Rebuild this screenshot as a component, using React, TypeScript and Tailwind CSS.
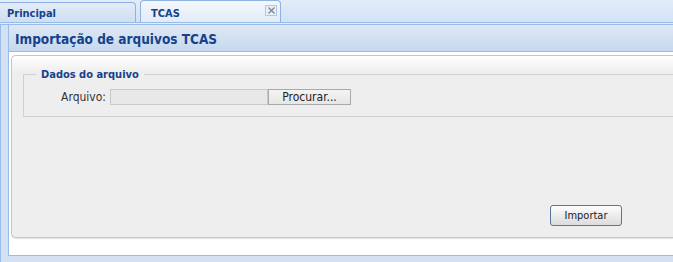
import React from "react";

const font = { fontFamily: "Tahoma, 'DejaVu Sans Condensed', 'DejaVu Sans', sans-serif" };

export default function App() {
  return (
    <div className="w-[673px] h-[262px] overflow-hidden bg-white" style={font}>
      {/* Tab strip */}
      <div className="h-[23px] flex items-end gap-[4px] bg-gradient-to-b from-[#e2edf9] to-[#d2e2f5] border-b border-[#99bbe8]">
        <div className="w-[137px] h-[20px] -ml-[1px] rounded-tr-[4px] border border-b-0 border-[#8db2e3] bg-gradient-to-b from-[#e3ecf7] to-[#cfdef2] flex items-end pb-[3px] pl-[7px]">
          <span className="text-[11px] font-bold text-[#15428b] leading-none">Principal</span>
        </div>
        <div className="w-[141px] h-[22px] rounded-t-[4px] border border-b-0 border-[#8db2e3] bg-gradient-to-b from-[#f4f8fd] to-[#e1ebf7] flex items-center pl-[10px] pr-[3px]">
          <span className="text-[11px] font-bold text-[#15428b] leading-none flex-1 pt-[3px]">TCAS</span>
          <span className="w-[12px] h-[11px] mt-[-2px] border border-[#b8c8dc] bg-[#e9eff7] flex items-center justify-center">
            <svg width="7" height="7" viewBox="0 0 7 7">
              <path d="M0.5 0.5 L6.5 6.5 M6.5 0.5 L0.5 6.5" stroke="#6d7f96" strokeWidth="1.1" />
            </svg>
          </span>
        </div>
      </div>
      <div className="h-[1px] bg-[#e4edf8]" />
      <div className="h-[1px] bg-[#99bbe8]" />
      {/* Panel */}
      <div className="h-[237px] bg-[#d3e1f2] border-l border-[#99bbe8] pl-[7px] pb-[6px] flex flex-col">
        <div className="flex-1 flex flex-col border-l border-b border-[#99bbe8] bg-white">
          <div className="h-[27px] shrink-0 bg-gradient-to-b from-[#dfe8f4] to-[#c6d8ef] border-b border-[#99bbe8] flex items-center pl-[6px] pt-[4px]">
            <span className="text-[13.5px] font-bold text-[#15428b] leading-none">Importação de arquivos TCAS</span>
          </div>
          <div className="flex-1 pt-[3px] pl-[2px] pb-[17px] flex flex-col">
            <div className="flex-1 rounded-l-[5px] border border-r-0 border-[#c6c6c6] shadow-[0_1px_1px_rgba(0,0,0,0.12)] bg-gradient-to-b from-[#ffffff] via-[#eeeeee] via-[9%] to-[#eeeeee] flex flex-col pl-[11px] pt-[13px]">
              <fieldset className="border border-r-0 border-[#d0d0d0] rounded-none px-[0px] pt-[8px] pb-[10px] m-0">
                <legend className="ml-[12px] px-[5px] text-[11px] font-bold text-[#15428b] leading-none">Dados do arquivo</legend>
                <div className="flex items-center">
                  <span className="w-[86px] text-right pr-[4px] text-[12px] text-[#333333]">Arquivo:</span>
                  <div className="w-[158px] h-[16px] bg-[#e8e8e8] border border-[#c9c9c9]" />
                  <button className="w-[83px] h-[16px] bg-gradient-to-b from-[#f4f4f4] to-[#e6e6e6] border border-[#a9a9a9] text-[12px] text-[#222222] leading-none flex items-center justify-center">
                    Procurar...
                  </button>
                </div>
              </fieldset>
              <div className="flex-1 flex items-end justify-start pb-[11px] pl-[527px]">
                <button className="w-[72px] h-[21px] rounded-[3px] border border-[#5b7597] bg-gradient-to-b from-[#fdfdfd] to-[#dcdcdc] text-[11px] text-[#1c1c1c] leading-none flex items-center justify-center">
                  Importar
                </button>
              </div>
            </div>
          </div>
        </div>
      </div>
    </div>
  );
}
